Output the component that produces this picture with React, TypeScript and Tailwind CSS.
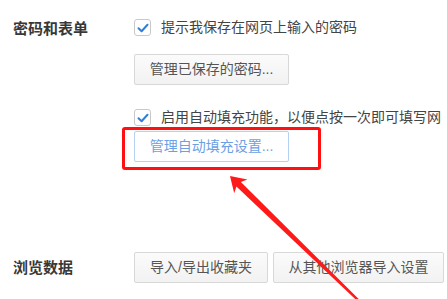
import React from "react";

const FONT = { fontFamily: '"Liberation Sans", "Noto Sans CJK SC", sans-serif' };

function Check({ label }: { label: string }) {
  return (
    <div className="flex h-[17px] items-center gap-[10px] whitespace-nowrap">
      <span className="flex h-[17px] w-[17px] shrink-0 items-center justify-center rounded-[3px] border border-[#c9c9c9] bg-white">
        <svg width="12" height="10" viewBox="0 0 12 10" fill="none">
          <path d="M1.5 5.2 L4.6 8.2 L10.5 1.8" stroke="#2f7fd8" strokeWidth="2" strokeLinecap="round" strokeLinejoin="round" />
        </svg>
      </span>
      <span className="text-[14px] leading-[17px] text-[#444]">{label}</span>
    </div>
  );
}

function Btn({ children, w, active }: { children: React.ReactNode; w: string; active?: boolean }) {
  return (
    <div
      className={
        active
          ? `${w} flex h-[31px] items-center justify-center rounded-[2px] border border-[#b5d2f4] bg-white text-[14px] text-[#6d9fe3] whitespace-nowrap`
          : `${w} flex h-[31px] items-center justify-center rounded-[2px] border border-[#d8d8d8] bg-gradient-to-b from-[#fbfbfb] to-[#f2f2f2] text-[14px] text-[#555] whitespace-nowrap`
      }
    >
      {children}
    </div>
  );
}

export default function App() {
  return (
    <div className="relative h-[299px] w-[447px] overflow-hidden bg-white" style={FONT}>
      <div className="flex pt-[19px]">
        <div className="w-[134px] shrink-0 pl-[13px] pt-[1px] text-[15px] font-bold leading-[17px] text-[#383838]">
          密码和表单
        </div>
        <div className="flex flex-col">
          <Check label="提示我保存在网页上输入的密码" />
          <div className="mt-[18px]">
            <Btn w="w-[155px]">管理已保存的密码...</Btn>
          </div>
          <div className="mt-[24px]">
            <Check label="启用自动填充功能，以便点按一次即可填写网" />
          </div>
          <div className="ml-[-12px] mt-[1px] w-[199px] rounded-[3px] border-[3px] border-[#ff1010] pb-[5px] pl-[9px] pt-[1px]">
            <Btn w="w-[155px]" active>
              管理自动填充设置...
            </Btn>
          </div>
        </div>
      </div>

      <div className="mt-[82px] flex items-center">
        <div className="w-[134px] shrink-0 pl-[13px] text-[15px] font-bold leading-[17px] text-[#383838]">
          浏览数据
        </div>
        <div className="flex gap-[5px]">
          <Btn w="w-[134px]">导入/导出收藏夹</Btn>
          <Btn w="w-[171px]">从其他浏览器导入设置</Btn>
        </div>
      </div>

      <svg className="pointer-events-none absolute left-0 top-0" width="447" height="299" viewBox="0 0 447 299">
        <polygon
          points="230,176 247.4,179.6 240.9,182.0 363.6,303.9 362.1,305.6 236.4,186.6 234.2,193.3"
          fill="#ff1a1a"
        />
      </svg>
    </div>
  );
}
